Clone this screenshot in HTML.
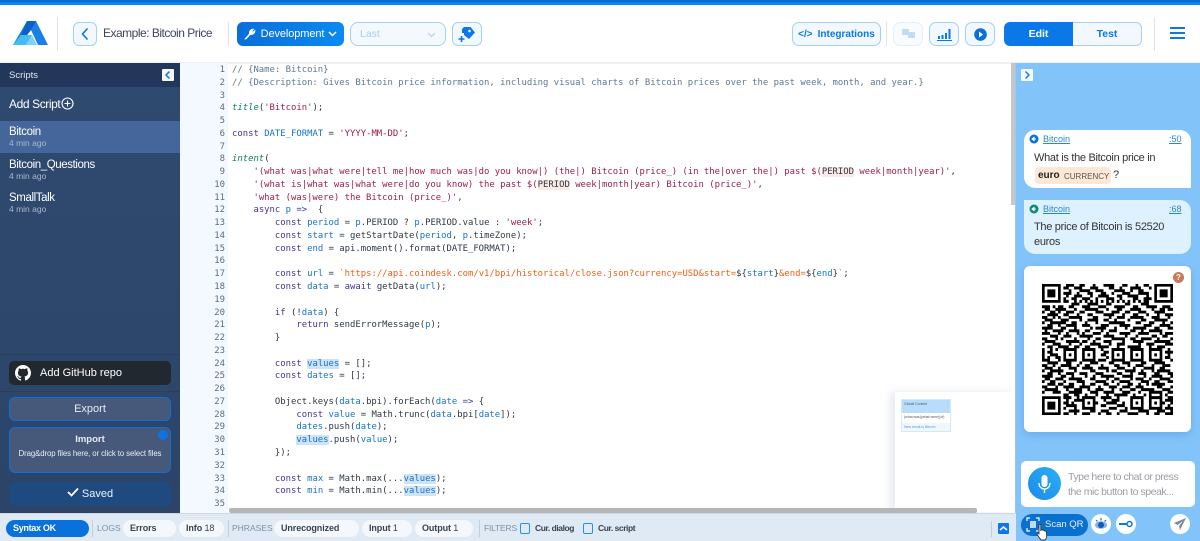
<!DOCTYPE html>
<html><head><meta charset="utf-8"><style>
html,body{margin:0;padding:0;background:#fff}
body{width:1200px;height:541px;overflow:hidden;position:relative;font-family:"Liberation Sans",sans-serif;color:#333;filter:blur(.3px)}
.a{position:absolute;white-space:nowrap;box-sizing:border-box}
.btn{position:absolute;box-sizing:border-box;background:#f2f8fe;border:1.5px solid #a3d0f8;border-radius:6px;color:#0a78e6;display:flex;align-items:center;justify-content:center;white-space:nowrap}
.sep{position:absolute;width:1px;background:#dfe4ea}
#code{position:absolute;left:232px;top:64px;font:8.92px/12.77px "DejaVu Sans Mono",monospace;color:#2f3844;white-space:pre}
#nums{position:absolute;left:190px;width:35px;top:64px;font:8.92px/12.77px "DejaVu Sans Mono",monospace;color:#5d6c7c;text-align:right;white-space:pre}
.c{color:#5f7890}.s{color:#9c1f42}.k{color:#3f3592}.v{color:#1472cc}.t{color:#0a7f62;font-style:italic}.u{color:#ea5f1c}.h{background:#cfe3f7}.p{background:#fbe9e4;color:#2f3844}
.pill{position:absolute;top:520px;height:17px;border-radius:9px;background:#f4f8fc;font-size:9px;font-weight:bold;color:#3a4350;line-height:17px;padding-left:7px;box-sizing:border-box;white-space:nowrap;letter-spacing:-.1px}
.pill i{font-style:normal;font-weight:normal}
.lab{position:absolute;top:523px;font-size:8.5px;color:#7c90a8;white-space:nowrap}
.cb{position:absolute;top:523px;width:10px;height:11px;border:1.3px solid #2b8fe8;border-radius:2px;box-sizing:border-box}
.fl{position:absolute;top:523px;font-size:8.5px;font-weight:bold;color:#3a4350;white-space:nowrap;letter-spacing:-.45px}
.sc{position:absolute;left:9px;color:#fff;font-size:11.5px;white-space:nowrap;letter-spacing:-.4px}
.tm{position:absolute;left:9px;color:#aab9cc;font-size:8.5px;white-space:nowrap}
</style></head><body>
<div class="a" style="left:0;top:0;width:1200px;height:5px;background:linear-gradient(#0a6ed0 0,#0a6ed0 2px,#0a8df2 3px,#0a8df2 5px)"></div>
<svg class="a" style="left:13px;top:21px" width="35" height="24" viewBox="0 0 35 24"><path d="M14 0h9L35 24H25L18 9 6 24H0z" fill="#1a7fe6"/><path d="M0 24 8 14h11l-6 10z" fill="#45bdf3"/><path d="M14 0h9l-5 9-4 5H8z" fill="#0d5fc8"/><path d="M19 14l5 10H13z" fill="#7ed2f8"/></svg>
<div class="sep" style="left:57px;top:17px;height:34px"></div>
<div class="btn" style="left:73px;top:22px;width:24px;height:24px"><svg width="10" height="14" viewBox="0 0 10 14"><path d="M7.500 1.500 2.500 7l5 5.500" fill="none" stroke="#0a78e6" stroke-width="1.600"/></svg></div>
<div class="a" style="left:103px;top:26px;font-size:12px;letter-spacing:-.5px;color:#3c4560">Example: Bitcoin Price</div>
<div class="sep" style="left:228px;top:22px;height:24px"></div>
<div class="btn" style="left:237px;top:22px;width:107px;height:24px;background:linear-gradient(90deg,#0a6ed8,#0a8bf0);border:0;color:#fff;font-size:11px;letter-spacing:-.1px;border-radius:6px"><svg width="12" height="12" viewBox="0 0 12 12" style="margin-right:5px"><path d="M1 11 5.500 5.800C5 3.500 6.500 1 9.500 1.200L7.700 3.200 8.800 4.300 10.900 2.500C11 5.500 8.500 7 6.200 6.500L2 11z" fill="#fff" stroke="#fff" stroke-width=".8"/></svg>Development<svg width="9" height="6" viewBox="0 0 9 6" style="margin-left:4px"><path d="M1 1l3.500 3.500L8 1" fill="none" stroke="#fff" stroke-width="1.500"/></svg></div>
<div class="btn" style="left:350px;top:22px;width:96px;height:24px;justify-content:flex-start;padding-left:9px;color:#a9cdf0;font-size:10.500px;background:#f4f9fe;border-radius:8px">Last<svg width="9" height="6" viewBox="0 0 9 6" style="position:absolute;right:9px;top:9px"><path d="M1 1l3.500 3.500L8 1" fill="none" stroke="#bcd6ee" stroke-width="1.300"/></svg></div>
<div class="btn" style="left:452px;top:22px;width:30px;height:24px"><svg width="18" height="17" viewBox="0 0 18 17"><path d="M6 1h6.500L17 6.500 11 13 6 9V7H4V3z" fill="#0a78e6"/><circle cx="11.500" cy="5" r="1.300" fill="#fff"/><path d="M0.500 13h6M3.500 10v6" stroke="#0a78e6" stroke-width="1.600"/></svg></div>

<div class="btn" style="left:792px;top:22px;width:89px;height:24px;font-size:10px;font-weight:bold;border-radius:7px"><span style="font-size:10px;margin-right:5px">&lt;/&gt;</span>Integrations</div>
<div class="sep" style="left:886px;top:22px;height:24px"></div>
<div class="btn" style="left:893px;top:22px;width:30px;height:24px;border-color:#e3f0fb;background:#f8fbff;border-radius:7px"><svg width="13" height="10" viewBox="0 0 13 10"><path d="M0 0h7v6H0zM6 3h7v6H6z" fill="#c3dcf3"/></svg></div>
<div class="btn" style="left:929px;top:22px;width:30px;height:24px;border-radius:7px"><svg width="15" height="13" viewBox="0 0 15 13"><path d="M1 8h2v3H1zM4.500 7h2v4h-2zM8 5h2v6H8zM11.500 1h2v10h-2zM0 12h15v1H0z" fill="#0a78e6"/></svg></div>
<div class="btn" style="left:965px;top:22px;width:30px;height:24px;border-radius:7px"><svg width="13" height="13" viewBox="0 0 13 13"><circle cx="6.500" cy="6.500" r="6.300" fill="#0a70d8"/><path d="M5 3.500l4 3-4 3z" fill="#fff"/></svg></div>
<div class="btn" style="left:1004px;top:22px;width:69px;height:24px;background:#0a78e6;border:0;color:#fff;font-size:10.500px;font-weight:bold;border-radius:6px 0 0 6px">Edit</div>
<div class="btn" style="left:1073px;top:22px;width:69px;height:24px;font-size:10.500px;font-weight:bold;border-left:0;border-radius:0 6px 6px 0">Test</div>
<div class="sep" style="left:1154px;top:17px;height:34px"></div>
<div class="a" style="left:1170px;top:27px;width:15px;height:12px;border-top:2px solid #0a78e6;border-bottom:2px solid #0a78e6"><div style="height:2px;background:#0a78e6;margin-top:3px"></div></div>
<div class="a" style="left:0;top:62px;width:1200px;height:1.500px;background:#eef0f4"></div>

<!-- sidebar -->
<div class="a" style="left:0;top:63px;width:180px;height:450px;background:linear-gradient(#2f4a70,#2c4468)"></div>
<div class="a" style="left:0;top:63px;width:180px;height:24px;background:#23375a"></div>
<div class="a" style="left:9px;top:70px;color:#dfe6f0;font-size:9.500px">Scripts</div>
<div class="a" style="left:162px;top:69px;width:12px;height:12px;background:#f2f8fe;border-radius:1px"><svg width="12" height="12" viewBox="0 0 12 12" style="display:block"><path d="M7.500 2.500 4 6l3.500 3.500" fill="none" stroke="#0a78e6" stroke-width="1.500"/></svg></div>
<div class="a" style="left:9px;top:97px;color:#fff;font-size:12px;letter-spacing:-.4px">Add Script</div>
<svg class="a" style="left:61px;top:97px" width="13" height="13" viewBox="0 0 13 13"><circle cx="6.500" cy="6.500" r="5.500" fill="none" stroke="#fff" stroke-width="1.100"/><path d="M3.500 6.500h6M6.500 3.500v6" stroke="#fff" stroke-width="1.100"/></svg>
<div class="a" style="left:0;top:121px;width:180px;height:32px;background:#44669a"></div>
<div class="sc" style="top:126px">Bitcoin</div><div class="tm" style="top:138px">4 min ago</div>
<div class="sc" style="top:159px">Bitcoin_Questions</div><div class="tm" style="top:171px">4 min ago</div>
<div class="sc" style="top:192px">SmallTalk</div><div class="tm" style="top:204px">4 min ago</div>
<div class="a" style="left:0;top:354px;width:180px;height:1px;background:#2a3f60"></div>
<div class="a" style="left:9px;top:361px;width:162px;height:24px;background:#22282f;border-radius:5px;color:#fff;font-size:11px;line-height:24px;padding-left:31px">Add GitHub repo</div>
<svg class="a" style="left:15px;top:365px" width="16" height="16" viewBox="0 0 16 16"><path fill="#fff" d="M8 0C3.580 0 0 3.580 0 8c0 3.540 2.290 6.530 5.470 7.590.4.070.55-.17.55-.38v-1.340c-2.230.48-2.700-1.070-2.700-1.070-.36-.93-.89-1.170-.89-1.170-.73-.5.060-.49.060-.49.800.060 1.230.83 1.230.83.710 1.220 1.870.87 2.330.66.070-.52.280-.87.510-1.070-1.780-.2-3.640-.89-3.640-3.950 0-.87.310-1.590.820-2.150-.080-.2-.36-1.020.080-2.120 0 0 .670-.21 2.200.82A7.600 7.600 0 0 1 8 3.800c.680 0 1.360.09 2 .27 1.530-1.040 2.200-.82 2.200-.82.440 1.100.16 1.920.08 2.120.51.560.82 1.270.82 2.150 0 3.070-1.870 3.750-3.650 3.950.29.250.54.730.54 1.480v2.200c0 .21.150.46.550.38A8 8 0 0 0 16 8c0-4.420-3.580-8-8-8z"/></svg>
<div class="a" style="left:0;top:391px;width:180px;height:1px;background:#2a3f60"></div>
<div class="a" style="left:9px;top:397px;width:162px;height:24px;background:#46597a;border:1.300px solid #0f6fd4;border-radius:6px;color:#e8edf4;font-size:11px;line-height:23px;text-align:center">Export</div>
<div class="a" style="left:9px;top:427px;width:162px;height:46px;background:#46597a;border:1.300px solid #0f6fd4;border-radius:6px;color:#e8edf4;text-align:center"><div style="font-size:9.500px;font-weight:bold;margin-top:6px">Import</div><div style="font-size:7.800px;letter-spacing:-.1px;margin-top:4px">Drag&amp;drop files here, or click to select files</div></div>
<div class="a" style="left:158px;top:430px;width:10px;height:10px;border-radius:50%;background:#0f72e0"></div>
<div class="a" style="left:9px;top:482px;width:162px;height:24px;background:#1f4a80;border-radius:6px;color:#eef3f8;font-size:11px;line-height:25px;text-align:center"><svg width="12" height="10" viewBox="0 0 12 10" style="margin-right:3px"><path d="M1 5l3.500 3.500L11 1.500" fill="none" stroke="#fff" stroke-width="1.800"/></svg>Saved</div>

<!-- editor -->
<div class="a" style="left:180px;top:63px;width:48px;height:450px;background:#f3f9ff"></div>
<div id="nums">1
2
3
4
5
6
7
8
9
10
11
12
13
14
15
16
17
18
19
20
21
22
23
24
25
26
27
28
29
30
31
32
33
34
35</div>
<div id="code"><span class="c">// {Name: Bitcoin}</span>
<span class="c">// {Description: Gives Bitcoin price information, including visual charts of Bitcoin prices over the past week, month, and year.}</span>

<span class="t">title</span>(<span class="s">'Bitcoin'</span>);

<span class="k">const</span> <span class="v">DATE_FORMAT</span> = <span class="s">'YYYY-MM-DD'</span>;

<span class="t">intent</span>(
    <span class="s">'(what was|what were|tell me|how much was|do you know|) (the|) Bitcoin (price_) (in the|over the|) past $(<span class="p">PERIOD</span> week|month|year)'</span>,
    <span class="s">'(what is|what was|what were|do you know) the past $(<span class="p">PERIOD</span> week|month|year) Bitcoin (price_)'</span>,
    <span class="s">'what (was|were) the Bitcoin (price_)'</span>,
    <span class="k">async</span> <span class="v">p</span> <span class="k">=&gt;</span>  {
        <span class="k">const</span> <span class="v">period</span> = <span class="v">p</span>.PERIOD ? <span class="v">p</span>.PERIOD.value : <span class="s">'week'</span>;
        <span class="k">const</span> <span class="v">start</span> = getStartDate(<span class="v">period</span>, <span class="v">p</span>.timeZone);
        <span class="k">const</span> <span class="v">end</span> = api.moment().format(DATE_FORMAT);

        <span class="k">const</span> <span class="v">url</span> = <span class="u">`https://api.coindesk.com/v1/bpi/historical/close.json?currency=USD&amp;start=</span>${<span class="v">start</span>}<span class="u">&amp;end=</span>${<span class="v">end</span>}<span class="u">`</span>;
        <span class="k">const</span> <span class="v">data</span> = <span class="k">await</span> getData(<span class="v">url</span>);

        <span class="k">if</span> (!<span class="v">data</span>) {
            <span class="k">return</span> sendErrorMessage(<span class="v">p</span>);
        }

        <span class="k">const</span> <span class="v h">values</span> = [];
        <span class="k">const</span> <span class="v">dates</span> = [];

        Object.keys(<span class="v">data</span>.bpi).forEach(<span class="v">date</span> <span class="k">=&gt;</span> {
            <span class="k">const</span> <span class="v">value</span> = Math.trunc(<span class="v">data</span>.bpi[<span class="v">date</span>]);
            <span class="v">dates</span>.push(<span class="v">date</span>);
            <span class="v h">values</span>.push(<span class="v">value</span>);
        });

        <span class="k">const</span> <span class="v">max</span> = Math.max(...<span class="v h">values</span>);
        <span class="k">const</span> <span class="v">min</span> = Math.min(...<span class="v h">values</span>);
</div>
<div class="a" style="left:1011px;top:63px;width:4px;height:142px;background:#c4c7ca"></div>
<div class="a" style="left:1015px;top:63px;width:1px;height:478px;background:#9fc8ee"></div>
<!-- minimap -->
<div class="a" style="left:895px;top:392px;width:120px;height:120px;background:#fff;box-shadow:-5px 0 8px rgba(120,140,170,.18)"></div>
<div class="a" style="left:901px;top:399px;width:50px;height:33px;background:#f0f7fe;border:.5px solid #d4e8fb"><div style="height:13px;background:#b9dcfb"></div><div style="height:10px;background:#fff"></div></div>
<div class="a" style="left:904px;top:402px;font-size:3.500px;color:#45607c">Global Context</div>
<div class="a" style="left:904px;top:415px;font-size:3.500px;color:#555">(what was)(what were)(of)</div>
<div class="a" style="left:904px;top:425px;font-size:3.500px;color:#4d9be6">New result is Bitcoin</div>
<div class="a" style="left:229px;top:508px;width:748px;height:5px;background:#b4b6b8;border-radius:2px"></div>

<!-- bottom -->
<div class="a" style="left:0;top:513px;width:1016px;height:28px;background:#dfeaf4;border-top:1px solid #cfd8e2"></div>
<div class="pill" style="left:6px;width:83px;background:#0a70dc;color:#fff;letter-spacing:-.3px">Syntax OK</div>
<div class="sep" style="left:92px;top:520px;height:17px;background:#c3ced9"></div>
<div class="lab" style="left:97px">LOGS</div>
<div class="pill" style="left:123px;width:53px">Errors</div>
<div class="pill" style="left:179px;width:45px">Info <i>18</i></div>
<div class="sep" style="left:228px;top:520px;height:17px;background:#c3ced9"></div>
<div class="lab" style="left:232px">PHRASES</div>
<div class="pill" style="left:274px;width:85px">Unrecognized</div>
<div class="pill" style="left:362px;width:50px">Input <i>1</i></div>
<div class="pill" style="left:415px;width:58px">Output <i>1</i></div>
<div class="sep" style="left:479px;top:520px;height:17px;background:#c3ced9"></div>
<div class="lab" style="left:484px;letter-spacing:-.2px">FILTERS</div>
<div class="cb" style="left:520px"></div><div class="fl" style="left:535px">Cur. dialog</div>
<div class="cb" style="left:583px"></div><div class="fl" style="left:598px">Cur. script</div>
<div class="sep" style="left:991px;top:521px;height:16px;background:#c3ced9"></div>
<div class="a" style="left:998px;top:523px;width:11px;height:11px;background:#0a78e6;border-radius:1px"><svg width="11" height="11" viewBox="0 0 11 11" style="display:block"><path d="M2 7l3.500-3L9 7" fill="none" stroke="#fff" stroke-width="1.600"/></svg></div>

<!-- right panel -->
<div class="a" style="left:1016px;top:63px;width:184px;height:478px;background:#82c3fa"></div>
<div class="a" style="left:1021px;top:69px;width:12px;height:12px;background:#f5faff;border-radius:1px"><svg width="12" height="12" viewBox="0 0 12 12" style="display:block"><path d="M4.500 2.500 8 6 4.500 9.500" fill="none" stroke="#0a78e6" stroke-width="1.400"/></svg></div>
<div class="a" style="left:1024px;top:130px;width:167px;height:58px;background:#fff;border-radius:11px 11px 0 11px"></div>
<svg class="a" style="left:1029px;top:134px" width="10" height="10" viewBox="0 0 10 10"><circle cx="5" cy="5" r="4.500" fill="#0a70dc"/><path d="M3 5h4M5.500 3 3 5l2.500 2" fill="#fff" stroke="#fff"/></svg>
<div class="a" style="left:1043px;top:134px;font-size:9px;color:#2a84dc;text-decoration:underline">Bitcoin</div>
<div class="a" style="left:1169px;top:134px;font-size:9px;color:#2a84dc;text-decoration:underline">:50</div>
<div class="a" style="left:1034px;top:152px;font-size:11px;letter-spacing:-.3px;color:#333">What is the Bitcoin price in</div>
<div class="a" style="left:1035px;top:167px;width:76px;height:17px;background:#fde8d8;border-radius:4px"></div>
<div class="a" style="left:1038px;top:170px;font-size:10px;font-weight:bold;color:#222">euro</div>
<div class="a" style="left:1064px;top:172px;font-size:8px;color:#555">CURRENCY</div>
<div class="a" style="left:1113px;top:169px;font-size:11px;color:#333">?</div>
<div class="a" style="left:1024px;top:200px;width:167px;height:54px;background:#def1ff;border-radius:0 11px 11px 11px"></div>
<svg class="a" style="left:1029px;top:204px" width="10" height="10" viewBox="0 0 10 10"><circle cx="5" cy="5" r="4.500" fill="#0f8a78"/><path d="M3 5h4M5.500 3 3 5l2.500 2" fill="#fff" stroke="#fff"/></svg>
<div class="a" style="left:1043px;top:204px;font-size:9px;color:#2a84dc;text-decoration:underline">Bitcoin</div>
<div class="a" style="left:1169px;top:204px;font-size:9px;color:#2a84dc;text-decoration:underline">:68</div>
<div class="a" style="left:1034px;top:221px;font-size:11px;letter-spacing:-.3px;color:#333">The price of Bitcoin is 52520</div>
<div class="a" style="left:1034px;top:236px;font-size:11px;letter-spacing:-.3px;color:#333">euros</div>
<div class="a" style="left:1024px;top:266px;width:167px;height:166px;background:#fff;border-radius:6px;box-shadow:0 3px 8px rgba(50,110,180,.25)"></div>
<div class="a" style="left:1173px;top:272px;width:11px;height:11px;border-radius:50%;background:#c8795a;color:#fff;font-size:8px;font-weight:bold;text-align:center;line-height:11px">?</div>
<svg class="a" style="left:1042px;top:284px" width="131" height="131" viewBox="0 0 49 49" fill="none" stroke="#000" stroke-width="1.100">
<path d="M0 0h7v7H0zM1 1h5v5H1zM42 0h7v7h-7zM43 1h5v5h-5zM0 42h7v7H0zM1 43h5v5H1z" fill="#000" stroke="none" fill-rule="evenodd"/>
<path fill="#000" stroke="none" d="M2 2h3v3H2zM44 2h3v3h-3zM2 44h3v3H2z"/>
<path d="M9 .5h3M14 .5h2M19 .5h1M23 .5h4M30 .5h2M35 .5h1M38 .5h2
M8 1.500h2M12 1.500h3M18 1.500h3M25 1.500h2M29 1.500h1M33 1.500h4M40 1.500h1
M10 2.500h1M14 2.500h4M20 2.500h3M27 2.500h4M33 2.500h1M36 2.500h2
M8 3.500h3M13 3.500h1M17 3.500h2M22 3.500h2M26 3.500h1M30 3.500h3M36 3.500h4
M9 4.500h1M12 4.500h3M18 4.500h1M21 4.500h4M28 4.500h2M32 4.500h4M39 4.500h1
M8 5.500h1M11 5.500h2M15 5.500h3M20 5.500h1M24 5.500h3M29 5.500h1M34 5.500h2M38 5.500h3
M8 6.500h2M12 6.500h1M14 6.500h1M16 6.500h1M18 6.500h1M20 6.500h1M22 6.500h1M24 6.500h1M26 6.500h1M28 6.500h1M30 6.500h1M32 6.500h1M34 6.500h1M36 6.500h1M38 6.500h2
M11 7.500h3M17 7.500h4M24 7.500h2M31 7.500h2M37 7.500h3
M0 8.500h3M4 8.500h1M6 8.500h2M10 8.500h2M15 8.500h3M21 8.500h3M27 8.500h4M34 8.500h2M39 8.500h4M45 8.500h3
M1 9.500h2M5 9.500h4M12 9.500h1M16 9.500h5M24 9.500h1M28 9.500h2M33 9.500h4M41 9.500h1M44 9.500h2M47 9.500h2
M0 10.500h1M3 10.500h2M6 10.500h1M9 10.500h3M14 10.500h2M20 10.500h3M26 10.500h3M31 10.500h2M36 10.500h3M42 10.500h4
M2 11.500h4M8 11.500h2M13 11.500h1M17 11.500h2M23 11.500h4M30 11.500h1M34 11.500h2M39 11.500h1M43 11.500h1M46 11.500h3
M0 12.500h2M4 12.500h1M6 12.500h1M10 12.500h5M19 12.500h2M25 12.500h1M28 12.500h3M33 12.500h5M41 12.500h3M47 12.500h1
M1 13.500h3M7 13.500h3M14 13.500h1M17 13.500h4M23 13.500h2M27 13.500h1M32 13.500h1M37 13.500h2M42 13.500h5
M0 14.500h1M3 14.500h6M11 14.500h2M16 14.500h1M20 14.500h1M25 14.500h6M35 14.500h2M40 14.500h2M45 14.500h1M48 14.500h1
M2 15.500h2M6 15.500h1M9 15.500h4M15 15.500h3M22 15.500h3M29 15.500h4M38 15.500h3M44 15.500h4
M0 16.500h4M7 16.500h2M12 16.500h1M18 16.500h1M20 16.500h4M27 16.500h1M31 16.500h1M34 16.500h5M42 16.500h2M47 16.500h2
M1 17.500h1M4 17.500h4M10 17.500h4M16 17.500h2M22 17.500h1M25 17.500h3M33 17.500h2M37 17.500h1M40 17.500h5
M0 18.500h3M6 18.500h1M9 18.500h1M13 18.500h1M15 18.500h1M19 18.500h3M24 18.500h1M29 18.500h4M36 18.500h4M44 18.500h1M46 18.500h3
M3 19.500h3M8 19.500h3M14 19.500h5M23 19.500h4M31 19.500h1M35 19.500h1M41 19.500h2M45 19.500h2
M0 20.500h2M5 20.500h1M7 20.500h1M12 20.500h1M17 20.500h1M20 20.500h2M26 20.500h5M33 20.500h2M37 20.500h4M43 20.500h1M48 20.500h1
M1 21.500h4M9 21.500h5M15 21.500h2M19 21.500h1M23 21.500h3M30 21.500h1M34 21.500h4M42 21.500h6
M0 22.500h1M4 22.500h3M10 22.500h1M14 22.500h1M18 22.500h4M25 22.500h1M28 22.500h3M36 22.500h1M39 22.500h3M46 22.500h3
M2 23.500h2M6 23.500h4M12 23.500h2M16 23.500h2M21 23.500h4M28 23.500h1M32 23.500h5M40 23.500h1M43 23.500h3
M0 24.500h1M3 24.500h1M5 24.500h1M8 24.500h5M15 24.500h5M22 24.500h1M26 24.500h5M33 24.500h5M40 24.500h5M47 24.500h1
M0 25.500h1M2 25.500h2M8 25.500h1M12 25.500h1M15 25.500h1M19 25.500h1M23 25.500h2M26 25.500h1M30 25.500h1M33 25.500h1M37 25.500h1M40 25.500h1M44 25.500h1M46 25.500h3
M0 26.500h1M3 26.500h3M8 26.500h1M10 26.500h1M12 26.500h1M15 26.500h1M17 26.500h1M19 26.500h1M22 26.500h2M26 26.500h1M28 26.500h1M30 26.500h1M33 26.500h1M35 26.500h1M37 26.500h1M40 26.500h1M42 26.500h1M44 26.500h1M47 26.500h1
M0 27.500h1M2 27.500h1M5 27.500h2M8 27.500h1M12 27.500h1M15 27.500h1M19 27.500h1M24 27.500h1M26 27.500h1M30 27.500h1M33 27.500h1M37 27.500h1M40 27.500h1M44 27.500h1M46 27.500h2
M0 28.500h3M6 28.500h1M8 28.500h5M15 28.500h5M21 28.500h3M26 28.500h5M33 28.500h5M40 28.500h5M48 28.500h1
M2 29.500h4M9 29.500h2M14 29.500h1M18 29.500h3M25 29.500h2M30 29.500h3M37 29.500h2M42 29.500h4
M0 30.500h2M4 30.500h1M7 30.500h4M13 30.500h1M16 30.500h2M22 30.500h1M27 30.500h2M32 30.500h1M35 30.500h3M41 30.500h1M45 30.500h3
M1 31.500h3M6 31.500h1M10 31.500h3M15 31.500h4M21 31.500h4M28 31.500h3M34 31.500h1M38 31.500h4M44 31.500h2
M0 32.500h1M3 32.500h5M12 32.500h1M18 32.500h2M24 32.500h1M26 32.500h2M31 32.500h4M37 32.500h1M41 32.500h1M43 32.500h5
M2 33.500h2M6 33.500h1M9 33.500h3M14 33.500h3M20 33.500h3M28 33.500h2M33 33.500h1M36 33.500h3M42 33.500h2M47 33.500h2
M0 34.500h4M7 34.500h2M11 34.500h1M16 34.500h1M19 34.500h1M22 34.500h5M30 34.500h4M38 34.500h1M41 34.500h4M48 34.500h1
M1 35.500h2M5 35.500h3M10 35.500h5M18 35.500h2M24 35.500h1M27 35.500h2M33 35.500h1M35 35.500h3M40 35.500h1M44 35.500h4
M0 36.500h1M3 36.500h2M8 36.500h1M13 36.500h3M20 36.500h4M26 36.500h1M29 36.500h4M37 36.500h3M42 36.500h2M47 36.500h2
M2 37.500h3M6 37.500h2M10 37.500h2M15 37.500h1M18 37.500h2M23 37.500h2M28 37.500h1M32 37.500h2M36 37.500h1M39 37.500h1M41 37.500h5
M0 38.500h2M5 38.500h1M8 38.500h4M14 38.500h4M21 38.500h1M25 38.500h3M30 38.500h3M35 38.500h3M43 38.500h2M48 38.500h1
M1 39.500h5M9 39.500h1M12 39.500h3M17 39.500h1M20 39.500h3M26 39.500h1M29 39.500h1M33 39.500h2M37 39.500h5M45 39.500h3
M0 40.500h1M4 40.500h3M10 40.500h5M18 40.500h3M23 40.500h4M30 40.500h3M36 40.500h1M40 40.500h5M47 40.500h2
M8 41.500h2M12 41.500h2M16 41.500h1M20 41.500h1M24 41.500h1M27 41.500h5M34 41.500h1M38 41.500h1M40 41.500h1M44 41.500h1M46 41.500h1
M8 42.500h3M13 42.500h1M15 42.500h5M22 42.500h4M28 42.500h1M33 42.500h5M40 42.500h5M47 42.500h2
M9 43.500h1M12 43.500h3M15 43.500h1M19 43.500h1M23 43.500h1M26 43.500h3M33 43.500h1M37 43.500h1M40 43.500h1M44 43.500h1M46 43.500h3
M8 44.500h2M11 44.500h1M15 44.500h1M17 44.500h1M19 44.500h2M24 44.500h4M30 44.500h1M33 44.500h1M35 44.500h1M37 44.500h1M40 44.500h1M42 44.500h1M44 44.500h2M48 44.500h1
M9 45.500h4M15 45.500h1M19 45.500h1M22 45.500h2M28 45.500h3M33 45.500h1M37 45.500h1M40 45.500h1M44 45.500h1M47 45.500h1
M8 46.500h1M12 46.500h1M15 46.500h5M25 46.500h3M31 46.500h1M33 46.500h5M40 46.500h5M46 46.500h3
M10 47.500h4M18 47.500h2M22 47.500h3M29 47.500h3M36 47.500h4M43 47.500h3M48 47.500h1
M8 48.500h2M12 48.500h1M15 48.500h3M21 48.500h1M24 48.500h2M28 48.500h1M32 48.500h4M39 48.500h1M42 48.500h2M46 48.500h3"/>
</svg>
<div class="a" style="left:1021px;top:461px;width:174px;height:46px;background:#fff;border-radius:5px"></div>
<svg class="a" style="left:1028px;top:467px" width="33" height="33" viewBox="0 0 33 33"><defs><linearGradient id="mg" x1="0" y1="1" x2="1" y2="0"><stop offset="0" stop-color="#1a8ae8"/><stop offset="1" stop-color="#2cb0f5"/></linearGradient></defs><circle cx="16.500" cy="16.500" r="16.500" fill="url(#mg)"/><rect x="13.500" y="8" width="6" height="12" rx="3" fill="#fff"/><path d="M11 16c0 8 11 8 11 0M16.500 21.500V26" fill="none" stroke="#fff" stroke-width="1.300"/></svg>
<div class="a" style="left:1068px;top:471px;font-size:10.500px;letter-spacing:-.45px;color:#9a9ea4">Type here to chat or press</div>
<div class="a" style="left:1068px;top:486px;font-size:10.500px;letter-spacing:-.45px;color:#9a9ea4">the mic button to speak...</div>
<div class="a" style="left:1021px;top:514px;width:67px;height:22px;background:#0a70d0;border-radius:11px;color:#e8f2fc;font-size:9.500px;line-height:22px;padding-left:24px">Scan QR</div>
<svg class="a" style="left:1026px;top:517px" width="14" height="15" viewBox="0 0 14 15"><path d="M1 4V1h3M10 1h3v3M13 11v3h-3M4 14H1v-3" fill="none" stroke="#fff" stroke-width="1.200"/><path d="M4 4h6v7H4z" fill="#bcdcf7"/></svg>
<svg class="a" style="left:1036px;top:523px" width="13" height="18" viewBox="0 0 13 18"><path d="M3 1.500c1-.8 1.800 0 1.800 1V8l.5-1.500c1-.3 1.500 0 1.700.8.800-.4 1.500 0 1.700.7.800-.3 1.600.2 1.700 1l.3 4c0 1.500-1 3.500-1.700 4H5C4 15.500 1.500 12.500 1 11c0-1 1-1 2-.2z" fill="#fff" stroke="#333" stroke-width=".9"/></svg>
<div class="a" style="left:1091px;top:514px;width:20px;height:20px;border-radius:50%;background:#fff"></div>
<svg class="a" style="left:1094px;top:516px" width="14" height="14" viewBox="0 0 14 14"><ellipse cx="7" cy="9" rx="6" ry="3.800" fill="#7fb2e8"/><circle cx="7" cy="9" r="3" fill="#0c5fb8"/><path d="M2 4l1.500 1.500M7 2v2.500M12 4l-1.500 1.500" stroke="#0a70d8" stroke-width="1.200"/></svg>
<div class="a" style="left:1116px;top:514px;width:20px;height:20px;border-radius:50%;background:#fff"></div>
<svg class="a" style="left:1119px;top:520px" width="14" height="8" viewBox="0 0 14 8"><circle cx="10.500" cy="4" r="2.500" fill="none" stroke="#0a78e6" stroke-width="1.500"/><path d="M0 4h8" stroke="#0a78e6" stroke-width="2"/></svg>
<div class="a" style="left:1170px;top:514px;width:20px;height:20px;border-radius:50%;background:#fff"></div>
<svg class="a" style="left:1174px;top:518px" width="12" height="12" viewBox="0 0 12 12"><path d="M12 0 0 5l3.500 2L9 3 5 8l1 4z" fill="#7b8a96"/></svg>
</body></html>
